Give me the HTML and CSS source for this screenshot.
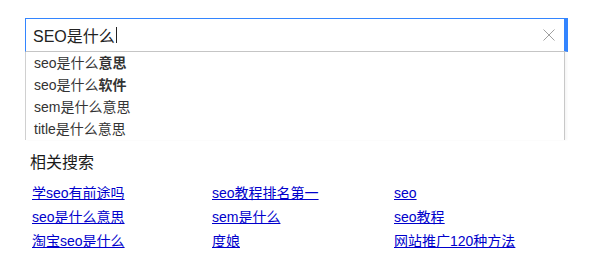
FILE: index.html
```html
<!DOCTYPE html>
<html lang="zh-CN">
<head>
  <meta charset="UTF-8">
  <title>SEO是什么</title>
  <link rel="stylesheet" href="styles.css">
</head>
<body>
  <div class="search">
    <div class="search-box">
      <span class="query">SEO是什么</span><span class="caret"></span>
      <svg class="clear" width="12" height="12" viewBox="0 0 12 12">
        <path d="M0.5 0.5 L11.5 11.5 M11.5 0.5 L0.5 11.5" stroke="#a0a0a0" stroke-width="1" fill="none"/>
      </svg>
    </div>
    <ul class="suggest">
      <li>seo是什么<b>意思</b></li>
      <li>seo是什么<b>软件</b></li>
      <li>sem是什么意思</li>
      <li>title是什么意思</li>
    </ul>
  </div>

  <div class="related">
    <div class="related-title">相关搜索</div>
    <div class="related-grid">
      <a href="#">学seo有前途吗</a>
      <a href="#">seo教程排名第一</a>
      <a href="#">seo</a>
      <a href="#">seo是什么意思</a>
      <a href="#">sem是什么</a>
      <a href="#">seo教程</a>
      <a href="#">淘宝seo是什么</a>
      <a href="#">度娘</a>
      <a href="#">网站推广120种方法</a>
    </div>
  </div>
</body>
</html>
```

FILE: styles.css
```css
* {
  margin: 0;
  padding: 0;
  box-sizing: border-box;
}

body {
  font-family: "Liberation Sans", Arial, "Noto Sans CJK SC", sans-serif;
  background: #fff;
  color: #333;
}

.search {
  position: relative;
  width: 543px;
  margin: 18px 0 0 25px;
}

.search-box {
  height: 34px;
  border-top: 1px solid #3385ff;
  border-left: 1px solid #3385ff;
  border-right: 4px solid #3385ff;
  border-bottom: 1px solid #c8c8c8;
  display: flex;
  align-items: center;
  padding-left: 7px;
  font-size: 16px;
  color: #222;
}

.caret {
  width: 1px;
  height: 16px;
  background: #222;
  margin-left: 1px;
}

.clear {
  margin-left: auto;
  margin-right: 9px;
}

.suggest {
  position: absolute;
  top: 34px;
  left: 0;
  width: 540px;
  height: 88px;
  list-style: none;
  background: #fff;
  border-left: 1px solid #d0d0d0;
  border-right: 1px solid #c8c8c8;
  box-shadow: 2px 0 2px rgba(0, 0, 0, 0.04);
  z-index: 10;
}

.suggest li {
  height: 22px;
  line-height: 22px;
  padding-left: 8px;
  font-size: 14px;
  color: #333;
}

.suggest b {
  font-weight: 700;
}

.related {
  margin: 100px 0 0 30px;
}

.related-title {
  font-size: 16px;
  line-height: 22px;
  color: #1a1a1a;
}

.related-grid {
  display: grid;
  grid-template-columns: 180px 182px 180px;
  margin-top: 7px;
  padding-left: 2px;
}

.related-grid a {
  font-size: 14px;
  line-height: 24px;
  color: #00c;
  text-decoration: underline;
}
```
